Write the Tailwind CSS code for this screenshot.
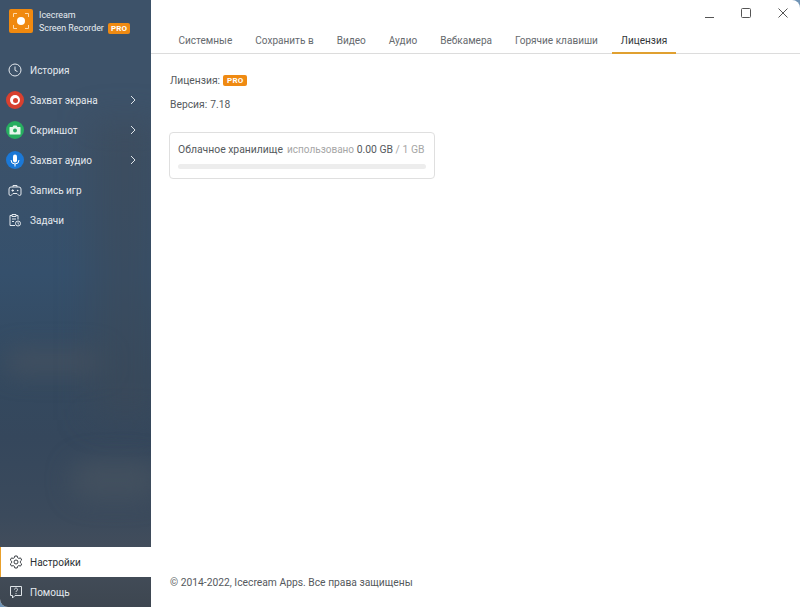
<!DOCTYPE html>
<html><head><meta charset="utf-8">
<script src="https://cdn.jsdelivr.net/npm/@tailwindcss/browser@4"></script>
</head>
<body class="m-0 bg-[#6f93b5]">
<div class="w-[800px] h-[607px] flex overflow-hidden font-['Roboto','Noto_Sans',sans-serif] rounded-tr-lg rounded-bl-lg bg-white relative">
  <aside class="relative w-[151px] h-full flex flex-col text-[10px] text-[#e4e9ee] overflow-hidden bg-[linear-gradient(180deg,#3d5269_0%,#3d5269_20%,#35506c_45%,#34495f_62%,#35475c_72%,#3b4a5c_85%,#444e5b_92%,#3d4650_100%)]">
    <div class="absolute left-[5px] top-[350px] w-[100px] h-[24px] rounded-full bg-[#48535f]/70 blur-md"></div>
    <div class="absolute left-[90px] top-[120px] w-[70px] h-[300px] bg-[#3e4a58]/50 blur-lg"></div>
    <div class="absolute left-[70px] top-[460px] w-[90px] h-[40px] rounded-full bg-[#4a5561]/60 blur-md"></div>

    <div class="relative flex items-start h-[55px] pl-[9px] pt-[9px]">
      <div class="w-[24px] h-[24px] rounded-[2px] bg-[#f0890f] flex items-center justify-center shrink-0">
        <svg width="18" height="18" viewBox="0 0 18 18" fill="none" stroke="#ffd9a8" stroke-width="1"><path d="M1.500 5V1.500H5M13 1.500H16.500V5M16.500 13V16.500H13M5 16.500H1.500V13"/><circle cx="9" cy="9" r="4" fill="#fff" stroke="none"/></svg>
      </div>
      <div class="ml-[6px] leading-[13px] text-[8.9px] text-[#e8edf1]">
        <div>Icecream</div>
        <div class="flex items-center whitespace-nowrap">Screen Recorder<span class="ml-[4px] h-[11px] px-[3px] rounded-[2px] bg-[#ef8a12] text-white text-[8px] font-bold leading-[11px] tracking-[0.2px]">PRO</span></div>
      </div>
    </div>

    <nav class="relative flex flex-col">
      <div class="flex items-center h-[30px] pl-[8px]">
        <svg class="w-[14px] h-[14px] shrink-0" viewBox="0 0 14 14" fill="none" stroke="#e4e9ee" stroke-width="1"><circle cx="7" cy="7" r="6"/><path d="M7 3.500V7.300L9.500 8.600"/></svg>
        <span class="ml-[8px]">История</span>
      </div>
      <div class="flex items-center h-[30px] pl-[6px] pr-[15px]">
        <div class="w-[18px] h-[18px] rounded-full bg-[#d8402f] flex items-center justify-center shrink-0"><div class="w-[10px] h-[10px] rounded-full bg-white flex items-center justify-center"><div class="w-[5px] h-[5px] rounded-full bg-[#d8402f]"></div></div></div>
        <span class="ml-[6px] grow">Захват экрана</span>
        <svg width="6" height="10" viewBox="0 0 6 10" fill="none" stroke="#dfe5ea" stroke-width="1"><path d="M1 1l4 4-4 4"/></svg>
      </div>
      <div class="flex items-center h-[30px] pl-[6px] pr-[15px]">
        <div class="w-[18px] h-[18px] rounded-full bg-[#27ae60] flex items-center justify-center shrink-0">
          <svg width="12" height="10" viewBox="0 0 12 10"><path d="M1 2h2.500l1-1.500h3l1 1.500H11a.5.5 0 0 1 .5.5v6.500a.5.5 0 0 1-.5.500H1a.5.5 0 0 1-.5-.5V2.500A.5.5 0 0 1 1 2z" fill="#e6f7ec"/><circle cx="6" cy="5.500" r="2" fill="#27ae60"/></svg>
        </div>
        <span class="ml-[6px] grow">Скриншот</span>
        <svg width="6" height="10" viewBox="0 0 6 10" fill="none" stroke="#dfe5ea" stroke-width="1"><path d="M1 1l4 4-4 4"/></svg>
      </div>
      <div class="flex items-center h-[30px] pl-[6px] pr-[15px]">
        <div class="w-[18px] h-[18px] rounded-full bg-[#1b78d6] flex items-center justify-center shrink-0">
          <svg width="10" height="13" viewBox="0 0 10 13" fill="none"><rect x="3" y="0.500" width="4" height="8" rx="2" fill="#fff"/><path d="M1 6a4 4 0 0 0 8 0M5 10v2.500" stroke="#fff" stroke-width="1"/></svg>
        </div>
        <span class="ml-[6px] grow">Захват аудио</span>
        <svg width="6" height="10" viewBox="0 0 6 10" fill="none" stroke="#dfe5ea" stroke-width="1"><path d="M1 1l4 4-4 4"/></svg>
      </div>
      <div class="flex items-center h-[30px] pl-[8px]">
        <svg class="w-[14px] h-[14px] shrink-0" viewBox="0 0 14 14" fill="none" stroke="#e4e9ee" stroke-width="1"><path d="M3 4h8a2 2 0 0 1 2 2v5a1.500 1.500 0 0 1-1.500 1.500c-1 0-1.500-1-2.500-2H5c-1 1-1.500 2-2.500 2A1.500 1.500 0 0 1 1 11V6a2 2 0 0 1 2-2zM5 4V2.500h4V4M3.500 7.500h2.500M4.700 6.300v2.400"/><circle cx="9.700" cy="7.500" r=".8" fill="#e4e9ee" stroke="none"/></svg>
        <span class="ml-[8px]">Запись игр</span>
      </div>
      <div class="flex items-center h-[30px] pl-[8px]">
        <svg class="w-[14px] h-[14px] shrink-0" viewBox="0 0 14 14" fill="none" stroke="#e4e9ee" stroke-width="1"><path d="M7 12.500H2V2.500h2M8 2.500h2v4M4 1.500h4v2H4zM4 6h4M4 8.500h2"/><circle cx="10" cy="10.500" r="2.500"/><path d="M10 9.300v1.300l.9.600"/></svg>
        <span class="ml-[8px]">Задачи</span>
      </div>
    </nav>

    <div class="relative mt-auto flex flex-col">
      <div class="flex items-center h-[30px] pl-[9px] bg-white text-[#2b2f33] border-l-[1px] border-[#e8a02c]">
        <svg class="w-[14px] h-[14px] shrink-0 -ml-[1px]" viewBox="0 0 14 14" fill="none" stroke="#3a3f44" stroke-width="1"><path d="M5.800 1h2.400l.4 1.700 1.200.7 1.700-.5 1.200 2.100-1.300 1.200v1.600l1.300 1.200-1.200 2.100-1.700-.5-1.200.7L8.200 13H5.800l-.4-1.700-1.200-.7-1.700.5L1.300 9l1.300-1.200V6.200L1.300 5l1.200-2.100 1.700.5 1.200-.7z"/><circle cx="7" cy="7" r="2"/></svg>
        <span class="ml-[7px] pt-[1px]">Настройки</span>
      </div>
      <div class="flex items-center h-[30px] pl-[9px]">
        <svg class="w-[14px] h-[14px] shrink-0" viewBox="0 0 14 14" fill="none" stroke="#dfe4e8" stroke-width="1"><path d="M1.500 1.500h11v9H6L3.500 13v-2.500h-2z"/><path d="M5.500 4.500a1.500 1.500 0 1 1 2.300 1.300c-.5.300-.8.600-.8 1.200"/><circle cx="7" cy="8.600" r=".6" fill="#dfe4e8" stroke="none"/></svg>
        <span class="ml-[7px] pt-[1px]">Помощь</span>
      </div>
    </div>
  </aside>

  <main class="flex-1 flex flex-col h-full text-[#55595d] text-[10.3px]">
    <div class="h-[26px] flex justify-end items-center pr-[11px] gap-[24.5px] shrink-0">
      <svg width="12" height="12" viewBox="0 0 12 12" class="mt-[2px]" stroke="#555" fill="none"><path d="M1 9.500h9"/></svg>
      <svg width="12" height="12" viewBox="0 0 12 12" class="-ml-[1px] mr-[1px]" stroke="#555" fill="none"><rect x="1.500" y="1.500" width="9" height="9" rx="1"/></svg>
      <svg width="12" height="12" viewBox="0 0 12 12" stroke="#555" fill="none"><path d="M1.500 1.500l9 9M10.500 1.500l-9 9"/></svg>
    </div>
    <div class="h-[28px] flex items-start border-b border-[#dcdcdc] pl-[16px] shrink-0 text-[#666a6e] text-[10.050px]">
      <div class="px-[11.500px] pt-[7px]">Системные</div>
      <div class="px-[11.500px] pt-[7px]">Сохранить в</div>
      <div class="px-[11.500px] pt-[7px]">Видео</div>
      <div class="px-[11.500px] pt-[7px]">Аудио</div>
      <div class="px-[11.500px] pt-[7px]">Вебкамера</div>
      <div class="px-[11.500px] pt-[7px]">Горячие клавиши</div>
      <div class="ml-[2.500px] px-[9px] pt-[7px] text-[#33373a] border-b-2 border-[#e0a030] h-[28px]">Лицензия</div>
    </div>
    <div class="flex-1 flex flex-col pl-[19px] pt-[19px] pb-[17px]">
      <div class="flex items-center h-[14px] mt-[1px]">Лицензия:<span class="ml-[3px] -mt-[2px] h-[11px] px-[4px] rounded-[2px] bg-[#ef8a12] text-white text-[8px] font-bold leading-[11px] tracking-[0.2px]">PRO</span></div>
      <div class="mt-[10px] h-[14px] flex items-center">Версия:<span class="ml-[3px]">7.18</span></div>
      <div class="-ml-[1px] mt-[20px] w-[266px] h-[47px] border border-[#dfdfdf] rounded-[4px] px-[8px] pt-[9px]">
        <div class="whitespace-nowrap h-[15px] leading-[15px] text-[10.4px]">Облачное хранилище<span class="ml-[4px] text-[#a6a6a6] text-[10px]">использовано</span> <span>0.00 GB</span> <span class="text-[#a6a6a6]">/ 1 GB</span></div>
        <div class="mt-[7px] h-[5px] w-[248px] rounded-full bg-[#ededed]"></div>
      </div>
      <div class="mt-auto">© 2014-2022, Icecream Apps. Все права защищены</div>
    </div>
  </main>
</div>
</body></html>
